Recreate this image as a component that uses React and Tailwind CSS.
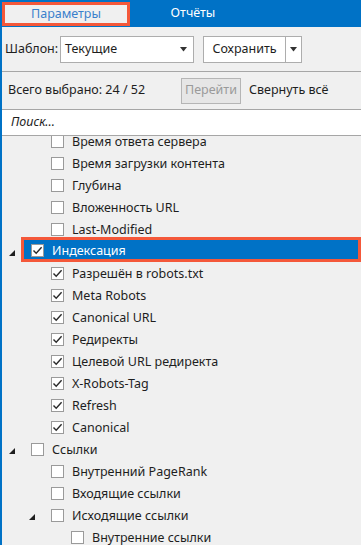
import React from "react";

const Tri = () => (
  <svg width="6" height="6" viewBox="0 0 6 6" className="block">
    <polygon points="6,0 6,6 0,6" fill="#1e1e1e" />
  </svg>
);

const Box = ({ checked }) => (
  <div className="w-[13px] h-[13px] shrink-0 border border-[#9a9a9a] bg-white flex items-center justify-center">
    {checked && (
      <svg width="11" height="11" viewBox="0 0 11 11" className="block">
        <polyline points="1.5,5.5 4.2,8.3 9.6,2.2" fill="none" stroke="#2a2a2a" strokeWidth="1.4" />
      </svg>
    )}
  </div>
);

const rows = [
  { t: "Время ответа сервера", l: 1 },
  { t: "Время загрузки контента", l: 1 },
  { t: "Глубина", l: 1 },
  { t: "Вложенность URL", l: 1 },
  { t: "Last-Modified", l: 1 },
  { t: "Индексация", l: 0, exp: true, c: true, hl: true },
  { t: "Разрешён в robots.txt", l: 1, c: true },
  { t: "Meta Robots", l: 1, c: true },
  { t: "Canonical URL", l: 1, c: true },
  { t: "Редиректы", l: 1, c: true },
  { t: "Целевой URL редиректа", l: 1, c: true },
  { t: "X-Robots-Tag", l: 1, c: true },
  { t: "Refresh", l: 1, c: true },
  { t: "Canonical", l: 1, c: true },
  { t: "Ссылки", l: 0, exp: true },
  { t: "Внутренний PageRank", l: 1 },
  { t: "Входящие ссылки", l: 1 },
  { t: "Исходящие ссылки", l: 1, exp: true },
  { t: "Внутренние ссылки", l: 2 },
];

const pad = ["pl-[2px]", "pl-[22px]", "pl-[42px]"];

export default function App() {
  return (
    <div
      className="w-[361px] h-[545px] overflow-hidden bg-[#f0f0f0] text-[#1e1e1e] text-[12.5px] leading-none"
      style={{ fontFamily: '"Noto Sans", "Open Sans", sans-serif' }}
    >
      {/* tabs */}
      <div className="h-[27px] bg-[#0072c6] flex items-start">
        <div className="ml-[2px] mt-[2px] w-[128px] h-[24px] border-[3px] border-[#f4583a] bg-[#f0f0f0] flex items-center justify-center text-[#3a80cc]">
          Параметры
        </div>
        <div className="w-[126px] h-[27px] flex items-center justify-center text-white">
          Отчёты
        </div>
      </div>

      <div className="border-l-2 border-[#0072c6] h-[518px] flex flex-col">
        {/* template row */}
        <div className="h-[44px] flex items-start pt-[9px] pl-[3px]">
          <span className="h-[27px] flex items-center w-[55px]">Шаблон:</span>
          <div className="w-[134px] h-[27px] bg-white border border-[#adadad] flex items-center pl-[4px] pr-[6px]">
            <span className="flex-1">Текущие</span>
            <svg width="7" height="5" viewBox="0 0 7 5"><polygon points="0,0 7,0 3.5,4.5" fill="#333" /></svg>
          </div>
          <div className="ml-[9px] w-[99px] h-[27px] bg-white border border-[#adadad] flex items-stretch">
            <div className="w-[82px] flex items-center justify-center border-r border-[#adadad]">Сохранить</div>
            <div className="flex-1 flex items-center justify-center">
              <svg width="7" height="5" viewBox="0 0 7 5"><polygon points="0,0 7,0 3.5,4.5" fill="#333" /></svg>
            </div>
          </div>
        </div>
        <div className="h-px bg-[#a6a6a6]" />

        {/* count row */}
        <div className="h-[37px] flex items-center pl-[6px]">
          <span className="w-[173px]">Всего выбрано: 24 / 52</span>
          <div className="w-[60px] h-[26px] border border-[#b5b5b5] bg-[#e6e6e6] text-[#9a9a9a] flex items-center justify-center">
            Перейти
          </div>
          <span className="ml-[8px]">Свернуть всё</span>
        </div>

        {/* search */}
        <div className="h-[27px] bg-white border-t border-b border-[#a6a6a6] flex items-center pl-[9px] italic">
          Поиск...
        </div>

        {/* tree */}
        <div className="flex-1 overflow-hidden">
          <div className="-mt-[6px]">
            {rows.map((r, i) => (
              <div key={i} className={`h-[22px] flex items-stretch ${pad[r.l]}`}>
                <div className="w-[20px] shrink-0 flex items-center pl-[5px] pt-[3px]">
                  {r.exp && <Tri />}
                </div>
                {r.hl ? (
                  <div className="flex-1 -ml-[3px] -mt-[3px] h-[25px] border-[3px] border-[#f4583a] bg-[#0072c6] text-white flex items-center pl-[7px] pt-[2px] gap-[8px]">
                    <Box checked={r.c} />
                    <span className="pt-[1px]">{r.t}</span>
                  </div>
                ) : (
                  <div className="flex-1 flex items-center pl-[7px] gap-[8px]">
                    <Box checked={r.c} />
                    <span className="pt-[2px]">{r.t}</span>
                  </div>
                )}
              </div>
            ))}
          </div>
        </div>
      </div>
    </div>
  );
}
